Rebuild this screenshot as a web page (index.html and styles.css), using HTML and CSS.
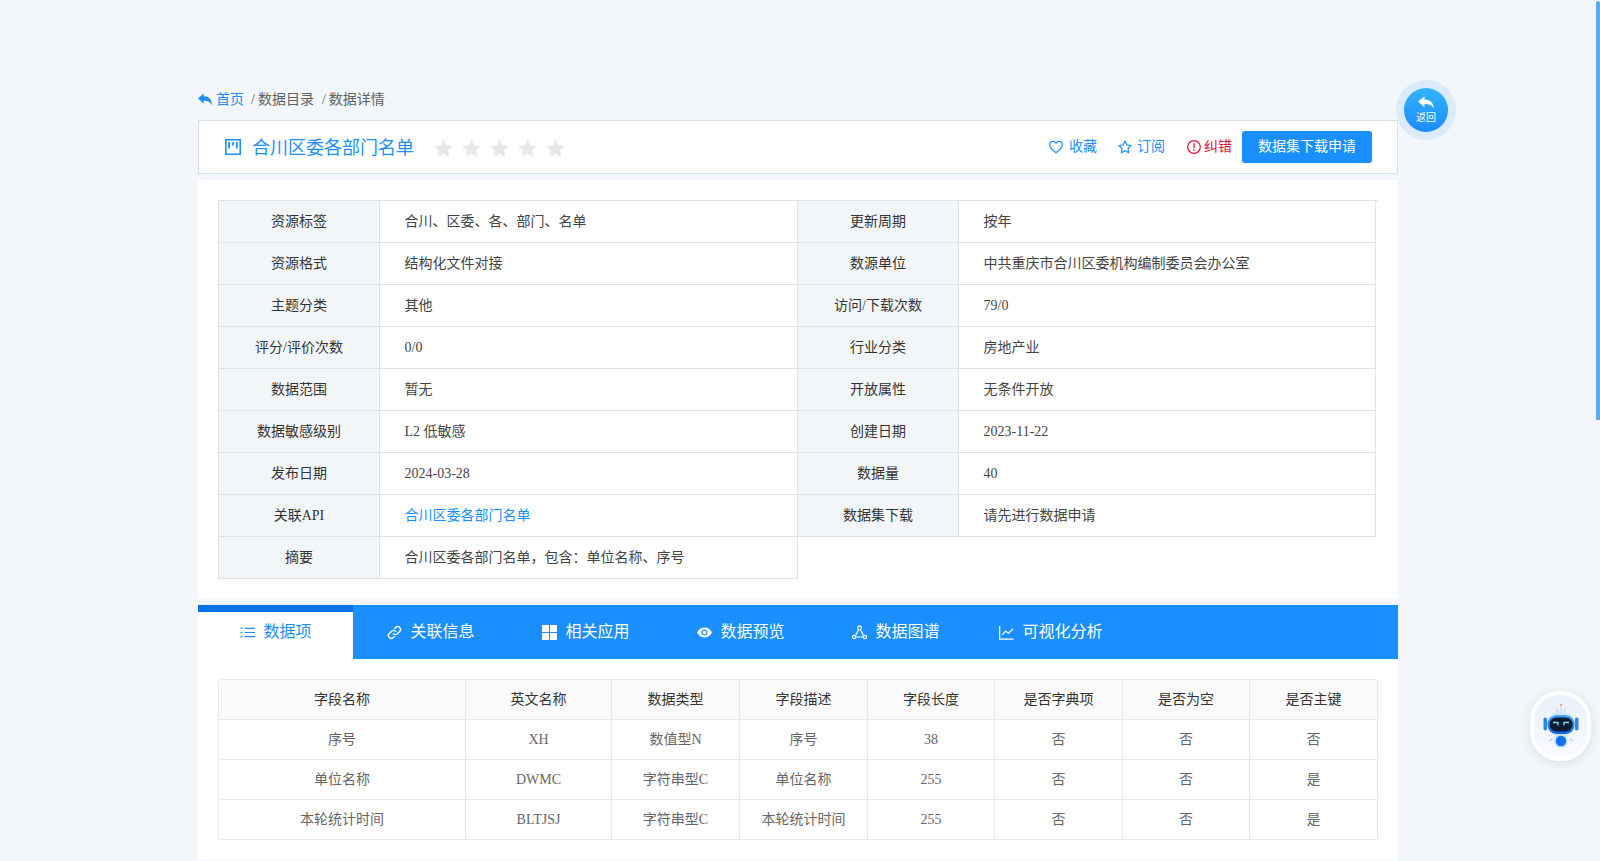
FILE: index.html
```html
<!DOCTYPE html>
<html lang="zh-CN">
<head>
<meta charset="utf-8">
<title>数据详情</title>
<link rel="stylesheet" href="styles.css">
</head>
<body>
<div class="page">
  <nav class="crumbs">
    <a class="crumb-home">
      <svg class="ico-home" viewBox="0 0 16 14"><path d="M0 5.600 6.500 0v3.400c5.600 0 9.300 3 9.500 10.600-1.900-4.300-4.300-5.600-9.500-5.600v3.400z" fill="currentColor"/></svg>首页</a>
    <span class="sep">/</span><span>数据目录</span>
    <span class="sep sep2">/</span><span>数据详情</span>
  </nav>

  <header class="title-card">
    <svg class="ico-title" viewBox="0 0 16 16"><path d="M.8.8h14.400v14.400H.8z" fill="none" stroke="currentColor" stroke-width="1.600"/><path d="M4 3v6.500M8 3v3.500M11.800 3v6.500" fill="none" stroke="currentColor" stroke-width="1.800"/></svg>
    <h1 class="title">合川区委各部门名单</h1>
    <div class="stars">
      <svg viewBox="0 0 20 19"><path d="m10 0 3 6.400 7 .9-5.100 4.800 1.300 6.900-6.200-3.400L3.800 19l1.300-6.900L0 7.300l7-.9z"/></svg>
      <svg viewBox="0 0 20 19"><path d="m10 0 3 6.400 7 .9-5.100 4.800 1.300 6.900-6.200-3.400L3.800 19l1.300-6.900L0 7.300l7-.9z"/></svg>
      <svg viewBox="0 0 20 19"><path d="m10 0 3 6.400 7 .9-5.100 4.800 1.300 6.900-6.200-3.400L3.800 19l1.300-6.900L0 7.300l7-.9z"/></svg>
      <svg viewBox="0 0 20 19"><path d="m10 0 3 6.400 7 .9-5.100 4.800 1.300 6.900-6.200-3.400L3.800 19l1.300-6.900L0 7.300l7-.9z"/></svg>
      <svg viewBox="0 0 20 19"><path d="m10 0 3 6.400 7 .9-5.100 4.800 1.300 6.900-6.200-3.400L3.800 19l1.300-6.900L0 7.300l7-.9z"/></svg>
    </div>
    <div class="actions">
      <a class="act act-fav">
        <svg viewBox="0 0 14 13"><path d="M7 12.200C3 9.200.7 7 .7 4.200.7 2.300 2.100.8 3.900.8 5.200.8 6.300 1.500 7 2.800 7.700 1.500 8.800.8 10.100.8c1.800 0 3.200 1.500 3.200 3.400 0 2.800-2.300 5-6.300 8z" fill="none" stroke="currentColor" stroke-width="1.200"/></svg>
        收藏</a>
      <a class="act act-sub">
        <svg viewBox="0 0 14 14"><path d="m7 1 1.800 3.900 4.200.6-3 3 .7 4.300L7 10.700l-3.700 2.100.7-4.300-3-3 4.200-.6z" fill="none" stroke="currentColor" stroke-width="1.200" stroke-linejoin="round"/></svg>
        订阅</a>
      <a class="act-err">
        <svg viewBox="0 0 14 14"><circle cx="7" cy="7" r="6.300" fill="none" stroke="currentColor" stroke-width="1.200"/><path d="M7 3.300v4.600M7 9.300v1.400" stroke="currentColor" stroke-width="1.300" fill="none"/></svg>
        纠错</a>
      <button class="apply">数据集下载申请</button>
    </div>
  </header>

  <section class="info-card">
    <div class="info-wrap">
      <div class="info-grid">
        <div class="k">资源标签</div><div class="v">合川、区委、各、部门、名单</div>
        <div class="k">更新周期</div><div class="v">按年</div>
        <div class="k">资源格式</div><div class="v">结构化文件对接</div>
        <div class="k">数源单位</div><div class="v">中共重庆市合川区委机构编制委员会办公室</div>
        <div class="k">主题分类</div><div class="v">其他</div>
        <div class="k">访问/下载次数</div><div class="v">79/0</div>
        <div class="k">评分/评价次数</div><div class="v">0/0</div>
        <div class="k">行业分类</div><div class="v">房地产业</div>
        <div class="k">数据范围</div><div class="v">暂无</div>
        <div class="k">开放属性</div><div class="v">无条件开放</div>
        <div class="k">数据敏感级别</div><div class="v">L2 低敏感</div>
        <div class="k">创建日期</div><div class="v">2023-11-22</div>
        <div class="k">发布日期</div><div class="v">2024-03-28</div>
        <div class="k">数据量</div><div class="v">40</div>
        <div class="k">关联API</div><div class="v"><a class="link">合川区委各部门名单</a></div>
        <div class="k">数据集下载</div><div class="v">请先进行数据申请</div>
        <div class="k">摘要</div><div class="v">合川区委各部门名单，包含：单位名称、序号</div>
      </div>
    </div>
  </section>

  <nav class="tabs">
    <a class="tab active">
      <svg viewBox="0 0 16 16"><path d="M5 3.500h11M5 8h11M5 12.500h11" stroke="currentColor" stroke-width="1.300" fill="none"/><path d="M1.500 2.700v1.600M1.500 7.200v1.600M1.500 11.700v1.600" stroke="currentColor" stroke-width="1.800" fill="none"/></svg>
      数据项</a>
    <a class="tab">
      <svg viewBox="0 0 16 16"><path d="M6.800 9.300a3 3 0 0 0 4.300 0l2.400-2.400a3 3 0 0 0-4.300-4.300L8 3.900" fill="none" stroke="currentColor" stroke-width="1.400" stroke-linecap="round"/><path d="M9.200 6.700a3 3 0 0 0-4.300 0L2.500 9.100a3 3 0 0 0 4.300 4.300L8 12.100" fill="none" stroke="currentColor" stroke-width="1.400" stroke-linecap="round"/></svg>
      关联信息</a>
    <a class="tab">
      <svg viewBox="0 0 16 16"><path d="M0 0h7.400v7.400H0zM8.600 0H16v7.400H8.600zM0 8.600h7.400V16H0zM8.600 8.600H16V16H8.600z" fill="currentColor"/></svg>
      相关应用</a>
    <a class="tab">
      <svg viewBox="0 0 16 16"><path fill-rule="evenodd" d="M0 8c1.800-3.400 4.500-5.300 8-5.300s6.200 1.900 8 5.300c-1.800 3.400-4.500 5.300-8 5.300S1.800 11.400 0 8zm8 3.200a3.200 3.200 0 1 0 0-6.400 3.200 3.200 0 0 0 0 6.400zM8 10a2 2 0 1 0 0-4 2 2 0 0 0 0 4z" fill="currentColor"/></svg>
      数据预览</a>
    <a class="tab">
      <svg viewBox="0 0 16 16"><circle cx="8" cy="3" r="2" fill="none" stroke="currentColor" stroke-width="1.300"/><circle cx="2.200" cy="12.800" r="1.700" fill="none" stroke="currentColor" stroke-width="1.300"/><circle cx="13.800" cy="12.800" r="1.700" fill="none" stroke="currentColor" stroke-width="1.300"/><path d="M7 4.800 4 10.800M9 4.800l3 6M4 12.800h8" stroke="currentColor" stroke-width="1.300" fill="none"/></svg>
      数据图谱</a>
    <a class="tab">
      <svg viewBox="0 0 16 16"><path d="M.7 1v14h15" fill="none" stroke="currentColor" stroke-width="1.300"/><path d="m3.500 10.500 3.500-4 3 2.500 5-5" fill="none" stroke="currentColor" stroke-width="1.300"/></svg>
      可视化分析</a>
  </nav>

  <section class="field-card">
    <div class="fields">
      <div class="th">字段名称</div><div class="th">英文名称</div><div class="th">数据类型</div><div class="th">字段描述</div><div class="th">字段长度</div><div class="th">是否字典项</div><div class="th">是否为空</div><div class="th">是否主键</div>
      <div class="td">序号</div><div class="td">XH</div><div class="td">数值型N</div><div class="td">序号</div><div class="td">38</div><div class="td">否</div><div class="td">否</div><div class="td">否</div>
      <div class="td">单位名称</div><div class="td">DWMC</div><div class="td">字符串型C</div><div class="td">单位名称</div><div class="td">255</div><div class="td">否</div><div class="td">否</div><div class="td">是</div>
      <div class="td">本轮统计时间</div><div class="td">BLTJSJ</div><div class="td">字符串型C</div><div class="td">本轮统计时间</div><div class="td">255</div><div class="td">否</div><div class="td">否</div><div class="td">是</div>
    </div>
  </section>
</div>

<a class="back">
  <span class="back-inner">
    <svg viewBox="0 0 16 13"><path d="M0 5.600 6.500.3v3.200c5.300 0 9 2.600 9.300 9.200-1.800-3.500-4.300-4.600-9.300-4.600v3.200z" fill="currentColor"/></svg>
    <span class="back-text">返回</span>
  </span>
</a>

<a class="bot">
  <svg viewBox="0 0 44 48">
    <defs>
      <linearGradient id="botBlue" x1="0" y1="0" x2="0" y2="1"><stop offset="0" stop-color="#4aa3f5"/><stop offset="1" stop-color="#0b63e5"/></linearGradient>
    </defs>
    <circle cx="22" cy="3" r="1.300" fill="#f0a89a"/>
    <path d="M22 4.500v5M17.500 6.500l1.500 4M26.500 6.500l-1.500 4" stroke="#a9cdf2" stroke-width=".8" fill="none"/>
    <ellipse cx="22" cy="22" rx="14" ry="12.500" fill="#d5e8fb"/>
    <rect x="4.500" y="15.500" width="3.500" height="13" rx="1.700" fill="#2f83ea"/>
    <rect x="36" y="15.500" width="3.500" height="13" rx="1.700" fill="#2f83ea"/>
    <rect x="8.500" y="13" width="27" height="19" rx="9" fill="url(#botBlue)"/>
    <rect x="10.500" y="15.500" width="23" height="14" rx="7" fill="#0d1b33"/>
    <path d="M14 20.500h5v3M25 23.500v-3h5" stroke="#6fe6e0" stroke-width="1.300" fill="none"/>
    <ellipse cx="22" cy="34" rx="7" ry="1.800" fill="#cfe4fa"/>
    <circle cx="22" cy="39" r="7" fill="#c7e0fa"/>
    <circle cx="22" cy="39" r="5.200" fill="#1471ee"/>
    <path d="M13.500 36.500c-1.200 1-2.500 1.500-3.500 2.800M30.500 36.500c1.200 1 2.500 1.500 3.500 2.800" stroke="#b9d9f7" stroke-width="1.500" fill="none"/>
  </svg>
</a>

<div class="scroll-thumb"></div>
</body>
</html>
```

FILE: styles.css
```css
* { box-sizing: border-box; }
html, body { margin: 0; height: 861px; overflow: hidden; }
body {
  background: #f3f6fa;
  font-family: "Liberation Serif", "Noto Sans CJK SC", serif;
  font-size: 14px;
  line-height: 20px;
  color: #606266;
}
.page { width: 1200px; margin: 0 0 0 198px; padding-top: 90px; }

.crumbs { display: flex; align-items: center; height: 20px; margin-bottom: 10px; }
.crumb-home { display: flex; align-items: center; color: #1a8fff; }
.ico-home { width: 14px; height: 13px; margin-right: 4px; margin-top: -1px; }
.sep { margin: 0 3px 0 7px; }
.sep2 { margin-left: 8px; }

.title-card {
  display: flex; align-items: center; height: 54px;
  background: #fff; border: 1px solid #d3dfeb;
  padding: 0 25px 0 26px;
}
.ico-title { width: 16px; height: 16px; color: #1a8fff; margin-right: 11px; }
.title { margin: 2px 0 0; font-size: 18px; font-weight: 400; color: #1a8fff; line-height: 24px; }
.stars { display: flex; gap: 9px; margin: 2px 0 0 20px; }
.stars svg { width: 19px; height: 18px; fill: #e8e8e8; }
.actions { display: flex; align-items: center; margin-left: auto; }
.act { display: flex; align-items: center; color: #1a8fff; margin-right: 21px; }
.act svg { width: 14px; height: 14px; margin-right: 6px; }
.act-sub { margin-right: 22px; }
.act-sub svg { margin-right: 5px; }
.act-err { display: flex; align-items: center; color: #d9143a; margin-right: 10px; }
.act-err svg { width: 14px; height: 14px; margin-right: 3px; }
.apply {
  width: 130px; height: 32px; border: 0; border-radius: 3px;
  background: #1a8fff; color: #fff; font: inherit; padding: 0;
  box-shadow: 0 1px 2px rgba(0,0,0,.06);
}

.info-card { background: #fff; margin-top: 6px; padding: 20px 20px 21px; }
.info-wrap { border-top: 1px solid #dfe2e6; }
.info-grid {
  display: grid; width: 1158px;
  grid-template-columns: 162px 418px 161px 417px;
  grid-auto-rows: 42px;
  margin-bottom: -1px;
}
.k, .v { display: flex; align-items: center; border-right: 1px solid #dfe2e6; border-bottom: 1px solid #dfe2e6; }
.k { justify-content: center; background: #f3f6f9; color: #333; }
.k:nth-child(4n+1) { border-left: 1px solid #dfe2e6; }
.v { padding-left: 24.500px; color: #444; }
.link { color: #1a8fff; }

.tabs { display: flex; height: 54px; margin-top: 6px; background: #1a8fff; }
.tab { display: flex; align-items: center; justify-content: center; flex: 0 0 155px; gap: 8px; font-size: 16px; color: #fff; white-space: nowrap; }
.tab svg { width: 15px; height: 15px; margin-left: 1px; flex: none; }
.tab.active { background: #fff; color: #1a8fff; box-shadow: inset 0 7px 0 #0074e6; }

.field-card { background: #fff; padding: 20px; }
.fields {
  display: grid;
  grid-template-columns: 247px 146px 128px 128px 127px 128px 127px 128px;
  grid-auto-rows: 40px;
  border-top: 1px solid #e8e8e8; border-left: 1px solid #e8e8e8;
  border-radius: 4px 4px 0 0;
  height: 161px;
}
.th, .td { display: flex; align-items: center; justify-content: center; border-right: 1px solid #e8e8e8; border-bottom: 1px solid #e8e8e8; }
.th { background: #fafafa; color: #333; }
.td { color: #666; }

.back {
  position: absolute; left: 1396px; top: 80px; width: 60px; height: 60px;
  border-radius: 50%; background: #dcebfb;
  display: flex; align-items: center; justify-content: center;
}
.back-inner {
  width: 44px; height: 44px; border-radius: 50%;
  background: linear-gradient(180deg, #33b4ff, #1a8bff);
  color: #fff; display: flex; flex-direction: column; align-items: center; padding-top: 8px;
}
.back-inner svg { width: 16px; height: 13px; }
.back-text { font-size: 10px; line-height: 14px; margin-top: 2px; }

.bot {
  position: fixed; left: 1530px; top: 691px; width: 61px; height: 70px;
  border-radius: 30px; border: 4px solid #fff;
  background: linear-gradient(180deg, #e9f0fa, #f9fbff);
  box-shadow: 0 2px 10px rgba(120,140,170,.22);
  display: flex; align-items: center; justify-content: center;
}
.bot svg { width: 44px; height: 48px; }

.scroll-thumb { position: fixed; left: 1596px; top: 1px; width: 4px; height: 419px; background: #5aaeea; border-radius: 2px 2px 0 0; }
```
